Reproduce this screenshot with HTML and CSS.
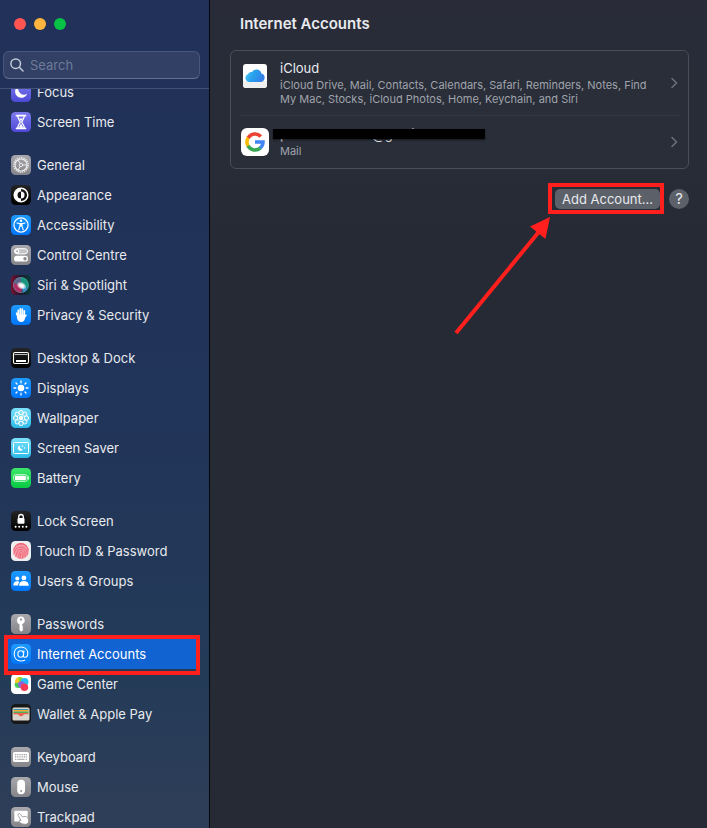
FILE: index.html
```html
<!DOCTYPE html>
<html lang="en-GB">
<head>
<meta charset="utf-8">
<meta name="viewport" content="width=device-width, initial-scale=1">
<title>Internet Accounts</title>
<link rel="stylesheet" href="styles.css">
</head>
<body>
<svg class="defs" aria-hidden="true">
  <defs>
    <linearGradient id="indigo" x2="0" y2="1"><stop stop-color="#7f7cf0"/><stop offset="1" stop-color="#4d48d5"/></linearGradient>
    <linearGradient id="grey" x2="0" y2="1"><stop stop-color="#a9a9ad"/><stop offset="1" stop-color="#858589"/></linearGradient>
    <linearGradient id="black" x2="0" y2="1"><stop stop-color="#242424"/><stop offset="1" stop-color="#000"/></linearGradient>
    <linearGradient id="blue" x2="0" y2="1"><stop stop-color="#1d9bff"/><stop offset="1" stop-color="#0075f8"/></linearGradient>
    <linearGradient id="cyan" x2="0" y2="1"><stop stop-color="#7be2fb"/><stop offset="1" stop-color="#2bbbe8"/></linearGradient>
    <linearGradient id="green" x2="0" y2="1"><stop stop-color="#3ce76a"/><stop offset="1" stop-color="#08c943"/></linearGradient>
    <linearGradient id="cloud" x1="0" y1="0" x2="1" y2="0.3"><stop stop-color="#51c8f5"/><stop offset="0.5" stop-color="#27a1ec"/><stop offset="1" stop-color="#3480e8"/></linearGradient>
    <linearGradient id="siri" x2="1" y2="0"><stop stop-color="#79102f"/><stop offset="0.45" stop-color="#211830"/><stop offset="1" stop-color="#063d3a"/></linearGradient>
    <radialGradient id="glow"><stop stop-color="#fff"/><stop offset="0.45" stop-color="#fff" stop-opacity="0.9"/><stop offset="1" stop-color="#fff" stop-opacity="0"/></radialGradient>
  </defs>
</svg>
<div class="window">
  <aside class="sidebar">
    <header class="sidebar-head">
      <div class="lights">
        <button class="light light-close" aria-label="Close"></button>
        <button class="light light-min" aria-label="Minimise"></button>
        <button class="light light-zoom" aria-label="Zoom"></button>
      </div>
      <label class="search">
        <svg width="14" height="14" viewBox="0 0 14 14" fill="none" stroke="#c3c9d6" stroke-width="1.5" stroke-linecap="round" aria-hidden="true"><circle cx="5.7" cy="5.7" r="4.8"/><path d="M9.3 9.3 13 13"/></svg>
        <input type="search" placeholder="Search" aria-label="Search">
      </label>
    </header>
    <nav class="list" aria-label="Settings">
      <div class="group">
        <a class="item" href="#"><svg class="icon" viewBox="0 0 20 20"><rect width="20" height="20" rx="4.5" fill="url(#indigo)"/><path d="M8 3.7a6.3 6.3 0 1 0 8.3 8.1A6 6 0 0 1 8 3.700z" fill="#fff"/></svg>Focus</a>
        <a class="item" href="#"><svg class="icon" viewBox="0 0 20 20"><rect width="20" height="20" rx="4.5" fill="url(#indigo)"/><path d="M5.500 3.600h9M5.500 16.400h9" stroke="#fff" stroke-width="1.700" stroke-linecap="round"/><path d="M6.800 4c0 3.500 2.400 4.200 2.400 6s-2.400 2.500-2.400 6M13.200 4c0 3.500-2.400 4.200-2.400 6s2.400 2.500 2.400 6" fill="none" stroke="#fff" stroke-width="1.300"/><path d="M8 6.500h4L10 9zM10 11.500l2.300 4.200H7.700z" fill="#fff"/></svg>Screen Time</a>
      </div>
      <div class="group">
        <a class="item" href="#"><svg class="icon" viewBox="0 0 20 20"><rect width="20" height="20" rx="4.500" fill="url(#grey)"/><g fill="none" stroke="#ececee"><circle cx="10" cy="10" r="7.200" stroke-width="1.400" stroke-dasharray="1.300 0.960"/><circle cx="10" cy="10" r="6" stroke-width="1.200"/><circle cx="10" cy="10" r="1.700"/><path d="M11.700 10H16M9.100 8.500 7 4.800M9.100 11.500 7 15.200"/></g></svg>General</a>
        <a class="item" href="#"><svg class="icon" viewBox="0 0 20 20"><rect width="20" height="20" rx="4.500" fill="url(#black)"/><circle cx="10" cy="10" r="6.800" fill="none" stroke="#fff" stroke-width="1.500"/><path d="M10 3.500a6.500 6.500 0 0 0 0 13V13.500a3.500 3.500 0 0 1 0-7z" fill="#fff"/><path d="M10 6.500a3.500 3.500 0 0 1 0 7z" fill="#fff"/></svg>Appearance</a>
        <a class="item" href="#"><svg class="icon" viewBox="0 0 20 20"><rect width="20" height="20" rx="4.500" fill="url(#blue)"/><circle cx="10" cy="10" r="7.100" fill="none" stroke="#fff" stroke-width="1.200"/><circle cx="10" cy="5.800" r="1.200" fill="#fff"/><path d="M6 8l3 .6v2.600L7.700 15M14 8l-3 .6v2.600l1.300 3.800" fill="none" stroke="#fff" stroke-width="1.100" stroke-linecap="round"/><path d="M9 8h2v3.500H9z" fill="#fff"/></svg>Accessibility</a>
        <a class="item" href="#"><svg class="icon" viewBox="0 0 20 20"><rect width="20" height="20" rx="4.500" fill="url(#grey)"/><rect x="3.500" y="3.700" width="13" height="5.200" rx="2.600" fill="#c4c4c7" stroke="#fff"/><circle cx="6.100" cy="6.300" r="2.200" fill="#fff"/><circle cx="6.100" cy="6.300" r="1" fill="#a0a0a4"/><rect x="3" y="10.800" width="14" height="5.800" rx="2.900" fill="#fff"/><circle cx="14" cy="13.700" r="1.700" fill="#8a8a8e"/></svg>Control Centre</a>
        <a class="item" href="#"><svg class="icon" viewBox="0 0 20 20"><rect width="20" height="20" rx="4.500" fill="url(#siri)"/><circle cx="10" cy="10" r="7.800" fill="#1c4a5b"/><path d="M10 2.200A7.800 7.800 0 0 1 17 13L10 10z" fill="#16957f"/><path d="M10 2.200A7.800 7.800 0 0 0 5 16l5-6z" fill="#5c6288"/><path d="M2.600 8a7.800 7.800 0 0 0 8 9.800L11 11z" fill="#b02c62"/><path d="M10.500 11 17 12.500a7.800 7.800 0 0 1-5 5z" fill="#2c8bc9"/><circle cx="10" cy="10" r="7.500" fill="none" stroke="#74b5b5" stroke-width=".7" opacity=".6"/><ellipse cx="10.800" cy="10.400" rx="5.500" ry="3.800" fill="url(#glow)" transform="rotate(25 10 10)"/></svg>Siri &amp; Spotlight</a>
        <a class="item" href="#"><svg class="icon" viewBox="0 0 20 20"><rect width="20" height="20" rx="4.500" fill="url(#blue)"/><g stroke="#fff" stroke-width="1.700" stroke-linecap="round" fill="none"><path d="M7.300 11V5.300M9.300 10V3.800M11.300 10V4.200M13.300 11V5.800M5.600 8.200l1.400 4"/></g><path d="M6.500 9.500h7.600v2.800c0 3-1.500 4.700-4 4.700-2.300 0-3.300-1.300-4.200-4z" fill="#fff"/><path d="M13 12.800l2-2.600" stroke="#fff" stroke-width="1.500" stroke-linecap="round"/></svg>Privacy &amp; Security</a>
      </div>
      <div class="group">
        <a class="item" href="#"><svg class="icon" viewBox="0 0 20 20"><rect width="20" height="20" rx="4.500" fill="url(#black)"/><rect x="2.500" y="4.500" width="15" height="11" rx="1.500" fill="none" stroke="#fff" stroke-width="1.100"/><path d="M3.500 6.500h13" stroke="#bbb"/><path d="M5 13h10" stroke="#fff" stroke-width="2"/></svg>Desktop &amp; Dock</a>
        <a class="item" href="#"><svg class="icon" viewBox="0 0 20 20"><rect width="20" height="20" rx="4.500" fill="url(#blue)"/><circle cx="10" cy="10" r="3.300" fill="#fff"/><path d="M10 3v1.800M10 15.200V17M3 10h1.800M15.200 10H17M5 5l1 1M14 14 15 15M15 5l-1 1M6 14 5 15" stroke="#fff" stroke-width="1.300" stroke-linecap="round"/></svg>Displays</a>
        <a class="item" href="#"><svg class="icon" viewBox="0 0 20 20"><rect width="20" height="20" rx="4.500" fill="url(#cyan)"/><g fill="#fff" fill-opacity=".15" stroke="#fff"><circle cx="10" cy="4.600" r="2.200"/><circle cx="13.800" cy="6.200" r="2.200"/><circle cx="15.400" cy="10" r="2.200"/><circle cx="13.800" cy="13.800" r="2.200"/><circle cx="10" cy="15.400" r="2.200"/><circle cx="6.200" cy="13.800" r="2.200"/><circle cx="4.600" cy="10" r="2.200"/><circle cx="6.200" cy="6.200" r="2.200"/></g><circle cx="10" cy="10" r="2.200" fill="#fff"/></svg>Wallpaper</a>
        <a class="item" href="#"><svg class="icon" viewBox="0 0 20 20"><rect width="20" height="20" rx="4.500" fill="url(#cyan)"/><rect x="2.500" y="4.500" width="15" height="11" rx=".8" fill="none" stroke="#fff"/><path d="M9 7.500a2.700 2.700 0 1 0 2.900 3.900A2.800 2.800 0 0 1 9 7.500z" fill="#fff"/><circle cx="11.500" cy="8.300" r=".7" fill="#fff"/><circle cx="13.700" cy="10" r=".8" fill="#fff"/></svg>Screen Saver</a>
        <a class="item" href="#"><svg class="icon" viewBox="0 0 20 20"><rect width="20" height="20" rx="4.500" fill="url(#green)"/><rect x="2.600" y="6.600" width="13.600" height="6.800" rx="2" fill="none" stroke="#fff" stroke-width=".9" opacity=".8"/><rect x="3.900" y="7.800" width="11" height="4.400" rx="1" fill="#fff"/><path d="M17.200 8.900v2.200" stroke="#fff" stroke-width="1.200" stroke-linecap="round"/></svg>Battery</a>
      </div>
      <div class="group">
        <a class="item" href="#"><svg class="icon" viewBox="0 0 20 20"><rect width="20" height="20" rx="4.500" fill="url(#black)"/><path d="M7.700 7.500V5.800a2.300 2.300 0 0 1 4.600 0v1.700" fill="none" stroke="#fff" stroke-width="1.300"/><rect x="6.500" y="7" width="7" height="5.800" rx="1" fill="#fff"/><g fill="#fff"><circle cx="4.600" cy="15.700" r="1"/><circle cx="8.200" cy="15.700" r="1"/><circle cx="11.800" cy="15.700" r="1"/><circle cx="15.400" cy="15.700" r="1"/></g></svg>Lock Screen</a>
        <a class="item" href="#"><svg class="icon" viewBox="0 0 20 20"><rect width="20" height="20" rx="4.500" fill="#efeeef"/><circle cx="10" cy="10" r="7.900" fill="#f49ba6"/><g fill="none" stroke="#ee5c70" stroke-width=".9" stroke-linecap="round"><path d="M4 5.300a7.700 7.700 0 0 1 12 0M2.600 9a7.500 7.500 0 0 1 14.800 0M3 13c.8-1 .2-6.700 7-6.700 5.600 0 6.800 4.700 6.300 7.500M4.800 15.200C6.700 12.500 5 8.400 10 8.400c4.500 0 4.500 4 4 7.600M7 16.700c2-3.200.5-6.400 3-6.400s2.300 3.500 1.500 6.900M9.700 12.400c.1 2-.2 3.500-.8 5"/></g></svg>Touch ID &amp; Password</a>
        <a class="item" href="#"><svg class="icon" viewBox="0 0 20 20"><rect width="20" height="20" rx="4.500" fill="url(#blue)"/><g fill="#fff"><circle cx="6.300" cy="7.500" r="2"/><path d="M2.300 14.500c0-2.700 1.500-4.200 4-4.200 1 0 1.800.3 2.300.8-1 1-1.500 2-1.500 3.400z"/><circle cx="12.900" cy="6.900" r="2.400"/><path d="M8 14.800c0-3 1.900-4.700 4.900-4.700s4.900 1.700 4.900 4.700z"/></g></svg>Users &amp; Groups</a>
      </div>
      <div class="group">
        <a class="item" href="#"><svg class="icon" viewBox="0 0 20 20"><rect width="20" height="20" rx="4.500" fill="url(#grey)"/><path fill-rule="evenodd" d="M10 2.500a4 4 0 0 0-1.500 7.700v5.700l1.700 1.800 2.200-2.200-1.200-1.200 1.200-1.200-1.200-1.200v-1.700A4 4 0 0 0 10 2.500zm0 1.800a1.200 1.200 0 1 1 0 2.400 1.200 1.200 0 0 1 0-2.400z" fill="#fff"/></svg>Passwords</a>
        <a class="item item-selected" href="#" aria-current="page"><svg class="icon" viewBox="0 0 20 20"><rect width="20" height="20" rx="4.500" fill="url(#blue)"/><g fill="none" stroke="#fff" stroke-width="1.100" stroke-linecap="round"><ellipse cx="9.700" cy="10" rx="2.800" ry="3.200"/><path d="M12.900 6.800 12.400 11.500c-.1 1.200.5 1.800 1.500 1.800 1.700 0 2.900-1.500 2.900-3.700C16.800 5.700 14 3 10.100 3 6 3 3.200 5.900 3.200 10s2.800 7 7 7c1.400 0 2.500-.2 3.500-.7"/></g></svg>Internet Accounts</a>
        <a class="item" href="#"><svg class="icon" viewBox="0 0 20 20"><rect width="20" height="20" rx="4.500" fill="#fff"/><circle cx="8.600" cy="7.600" r="4.600" fill="#ffc928"/><path d="M7.500 3.200A4.500 4.500 0 0 1 13 7L8 8z" fill="#8bd22f"/><circle cx="13.600" cy="7.800" r="3.900" fill="#28bdf4"/><circle cx="7.300" cy="10.500" r="3.600" fill="#46cb5a"/><path d="M3.900 9a4 4 0 0 1 3-3.700L9.500 9z" fill="#f6c62b"/><circle cx="10.400" cy="10.600" r="3.300" fill="#8966df"/><circle cx="13.400" cy="13.200" r="3.800" fill="#fb3b55"/></svg>Game Center</a>
        <a class="item" href="#"><svg class="icon" viewBox="0 0 20 20"><rect width="20" height="20" rx="4.500" fill="#17181a"/><rect x="1.500" y="3.500" width="17" height="13" rx="1.500" fill="#d9d5cb"/><path d="M2.500 5h15v1h-15z" fill="#3a91b0"/><path d="M2.500 6h15v1.500h-15z" fill="#f2a52f"/><path d="M2.500 7.500h15V9h-15z" fill="#4fac55"/><path d="M2.500 9h15v1.200h-4.200c-.8 0-1.200 2-3.300 2s-2.500-2-3.300-2H2.500z" fill="#ec5f4f"/></svg>Wallet &amp; Apple Pay</a>
      </div>
      <div class="group">
        <a class="item" href="#"><svg class="icon" viewBox="0 0 20 20"><rect width="20" height="20" rx="4.500" fill="url(#grey)"/><rect x="2" y="5" width="16" height="10" rx="1.500" fill="#fff"/><path d="M4 7.600h12M4 9.900h12" stroke="#a2a2a6" stroke-width="1.200" stroke-dasharray="1.100 .7"/><path d="M4 12.300h1.500M6.500 12.300h7M14.500 12.300H16" stroke="#a2a2a6"/></svg>Keyboard</a>
        <a class="item" href="#"><svg class="icon" viewBox="0 0 20 20"><rect width="20" height="20" rx="4.500" fill="url(#grey)"/><rect x="6.200" y="2.800" width="7.800" height="14.400" rx="3.700" fill="#fff"/><circle cx="10.100" cy="14" r="1" fill="#939397"/></svg>Mouse</a>
        <a class="item" href="#"><svg class="icon" viewBox="0 0 20 20"><rect width="20" height="20" rx="4.500" fill="url(#grey)"/><path d="M4.300 3.800h11.400a1 1 0 0 1 1 1v9.700H3.300V4.800a1 1 0 0 1 1-1z" fill="#fff"/><path d="M7.300 6.900c.8-.8 1.700-.3 2.200.5l1.800 2.500 3-.4c2 0 3 1.700 3.300 3.600.4 2.600-1 4.200-3.300 4.200-2.500 0-4.500-.8-6-2.600-.8-1 .2-1.800 1.200-1.300l.6.300L7.200 8.500c-.4-.6-.3-1.200.1-1.600z" fill="#fff" stroke="#8a8a8e" stroke-width=".8"/></svg>Trackpad</a>
      </div>
    </nav>
  </aside>

  <main class="main">
    <h1>Internet Accounts</h1>
    <section class="card">
      <a class="account" href="#">
        <span class="thumb"><svg width="24" height="24" viewBox="0 0 24 24" aria-hidden="true"><rect width="24" height="24" rx="3" fill="#fff"/><path d="M0 17h24v4a3 3 0 0 1-3 3H3a3 3 0 0 1-3-3z" fill="#efefef"/><path d="M6.500 18A4.200 4.200 0 0 1 5.100 9.900 3.500 3.500 0 0 1 8.900 8 5.200 5.200 0 0 1 18.400 9.400 4.400 4.400 0 0 1 18 18z" fill="url(#cloud)"/></svg></span>
        <span class="details">
          <span class="name">iCloud</span>
          <span class="desc">iCloud Drive, Mail, Contacts, Calendars, Safari, Reminders, Notes, Find My Mac, Stocks, iCloud Photos, Home, Keychain, and Siri</span>
        </span>
        <svg class="chevron" viewBox="0 0 7 12" aria-hidden="true"><path d="M1 1.500 5.500 6 1 10.500"/></svg>
      </a>
      <a class="account" href="#">
        <span class="thumb"><svg width="28" height="28" viewBox="0 0 28 28" aria-hidden="true"><rect width="28" height="28" rx="6" fill="#fff"/><g fill="none" stroke-width="3.600"><path d="M7.100 10a8 8 0 0 1 12.700-1.500" stroke="#ea4335"/><path d="M7.200 18.200a8 8 0 0 1 0-8.400" stroke="#fbbc05"/><path d="M19.400 19.900A8 8 0 0 1 7 17.900" stroke="#34a853"/><path d="M14 14h8a8 8 0 0 1-2.800 6" stroke="#4285f4"/></g></svg></span>
        <span class="details">
          <span class="name redacted"><span>p</span><span>@gmail.com</span></span>
          <span class="desc">Mail</span>
        </span>
        <svg class="chevron" viewBox="0 0 7 12" aria-hidden="true"><path d="M1 1.500 5.500 6 1 10.500"/></svg>
      </a>
    </section>
    <div class="actions">
      <div class="marked"><button class="add">Add Account...</button></div>
      <button class="help" aria-label="Help">?</button>
      <svg class="arrow" viewBox="0 0 100 120" aria-hidden="true"><path d="M3 117 89 12" stroke="#ff1f1c" stroke-width="4"/><path d="M97 1 77 10.500 92.500 23z" fill="#ff1f1c"/></svg>
    </div>
  </main>
</div>
</body>
</html>
```
FILE: styles.css
```css
* { box-sizing: border-box; }

body {
  margin: 0;
  background: #252a35;
  color: #e8eaee;
  font: 400 13px/16px Inter, "Liberation Sans", sans-serif;
}

a { color: inherit; text-decoration: none; }
button, input { font: inherit; color: inherit; }
button { border: 0; padding: 0; }

.defs { position: absolute; width: 0; height: 0; }

.window {
  display: flex;
  height: 100vh;
  overflow: hidden;
}

/* Sidebar */
.sidebar {
  display: flex;
  flex-direction: column;
  flex: 0 0 210px;
  border-right: 1px solid #05070b;
  background: linear-gradient(#213159, #213459 50%, #243b58 82%, #2f3e58);
}

.sidebar-head {
  flex: none;
  padding: 18px 9px 9px 3px;
  border-bottom: 1px solid #44527a;
}

.lights { display: flex; gap: 8px; padding-left: 11px; }
.light { width: 12px; height: 12px; border-radius: 50%; }
.light-close { background: #ff5552; }
.light-min { background: #ffb43e; }
.light-zoom { background: #07c246; }

.search {
  display: flex;
  align-items: center;
  gap: 6px;
  height: 28px;
  margin-top: 21px;
  padding: 0 6px;
  border: 1px solid #485679;
  border-bottom-color: #65718f;
  border-radius: 6px;
  background: #324066;
}
.search svg { flex: none; }
.search input {
  width: 100%;
  min-width: 0;
  padding: 0;
  border: 0;
  outline: 0;
  background: none;
}
.search input::placeholder { color: #6e7a97; opacity: 1; }

.list {
  display: flex;
  flex-direction: column;
  gap: 13px;
  flex: 1;
  min-height: 0;
  overflow: hidden;
}
.group:first-child { margin-top: -12px; }

.item {
  display: flex;
  align-items: center;
  gap: 6px;
  height: 30px;
  padding-left: 11px;
}
.icon { flex: none; width: 20px; height: 20px; }

.item-selected {
  position: relative;
  margin: 0 13px 0 8px;
  padding-left: 3px;
  background: #1263d2;
  color: #fff;
}
.item-selected::after {
  content: "";
  position: absolute;
  inset: -4px -4px -6px;
  border: 4px solid #ff1f1c;
}

/* Content pane */
.main {
  flex: 1;
  min-width: 0;
  padding: 14px 18px 0 20px;
  background: linear-gradient(#292c38, #272c37 20%, #252a35 30%);
}

h1 {
  margin: 0 0 16px 10px;
  font-size: 15px;
  line-height: 20px;
  font-weight: 600;
}

.card {
  padding: 0 9px;
  border: 1px solid #4a4e59;
  border-radius: 6px;
  background: #292e39;
}

.account {
  display: flex;
  align-items: center;
  min-height: 52px;
}
.account:first-child {
  min-height: 65px;
  border-bottom: 1px solid #343944;
}
.account:first-child .thumb { align-self: flex-start; margin-top: 13px; }

.thumb { display: flex; justify-content: center; flex: 0 0 30px; }
.details { flex: 1; min-width: 0; padding: 0 20px 0 10px; }
.name, .desc { display: block; }
.name { margin-bottom: 2px; }
.desc { color: #a0a3ab; font-size: 11px; line-height: 14px; }

.redacted {
  position: relative;
  display: flex;
  justify-content: space-between;
  width: 168px;
}
.redacted::after {
  content: "";
  position: absolute;
  inset: 3px -37px 3px -7px;
  background: #000;
  box-shadow: 0 1px 2px #0008;
}

.chevron {
  flex: none;
  width: 7px;
  height: 12px;
  margin-right: 1px;
  fill: none;
  stroke: #6c717c;
  stroke-width: 1.5;
  stroke-linecap: round;
}

.actions {
  position: relative;
  display: flex;
  justify-content: flex-end;
  align-items: center;
  gap: 5px;
  margin-top: 14px;
}
.marked {
  padding: 2px 0 1px 3px;
  border: 4px solid #ff1f1c;
}
.add {
  display: block;
  height: 20px;
  padding: 0 7px;
  border-radius: 5px;
  background: #5c6069;
}
.help {
  width: 20px;
  height: 20px;
  border-radius: 50%;
  background: #5c6069;
  font-size: 15px;
}
.arrow {
  position: absolute;
  top: 33px;
  right: 136px;
  width: 100px;
  height: 120px;
}
```
